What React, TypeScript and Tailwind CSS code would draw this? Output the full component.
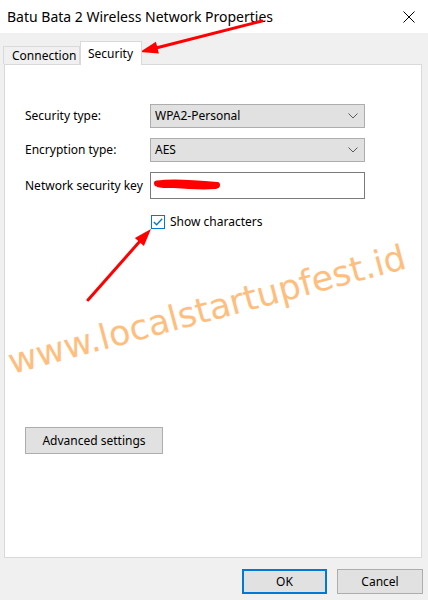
import React from "react";

const Chevron = () => (
  <svg width="10" height="6" viewBox="0 0 10 6" className="block">
    <path d="M0.5 0.5 L5 5 L9.5 0.5" fill="none" stroke="#5a5a5a" strokeWidth="1" />
  </svg>
);

export default function App() {
  return (
    <div
      className="relative w-[428px] h-[600px] bg-[#f0f0f0] flex flex-col overflow-hidden text-[#000] text-[12px]"
      style={{ fontFamily: '"Segoe UI", "Noto Sans", "Liberation Sans", sans-serif' }}
    >
      {/* title bar */}
      <div className="h-[33px] bg-white flex items-center justify-between pl-[7px] pr-[13px] shrink-0">
        <span className="text-[14px] leading-none">Batu Bata 2 Wireless Network Properties</span>
        <svg width="12" height="12" viewBox="0 0 12 12">
          <path d="M0.5 0.5 L11.5 11.5 M11.5 0.5 L0.5 11.5" stroke="#000" strokeWidth="1" />
        </svg>
      </div>

      {/* tabs */}
      <div className="flex items-end pl-[3px] mt-[8px] h-[23px] shrink-0 relative z-10">
        <div className="h-[18px] px-[8px] flex items-center border border-b-0 border-[#d9d9d9] bg-[#f0f0f0] w-[77px]">
          Connection
        </div>
        <div className="h-[24px] -mb-px px-[7px] flex items-center border border-b-0 border-[#d9d9d9] bg-white w-[62px]">
          Security
        </div>
      </div>

      {/* panel */}
      <div className="ml-[4px] w-[418px] h-[494px] bg-white border border-[#d9d9d9] shrink-0 flex flex-col pl-[20px] pt-[39px]">
        <div className="flex items-center h-[24px]">
          <span className="w-[125px]">Security type:</span>
          <div className="w-[215px] h-[24px] bg-[#e1e1e1] border border-[#adadad] flex items-center justify-between pl-[4px] pr-[6px]">
            <span>WPA2-Personal</span>
            <Chevron />
          </div>
        </div>
        <div className="flex items-center h-[24px] mt-[10px]">
          <span className="w-[125px]">Encryption type:</span>
          <div className="w-[215px] h-[24px] bg-[#e1e1e1] border border-[#adadad] flex items-center justify-between pl-[4px] pr-[6px]">
            <span>AES</span>
            <Chevron />
          </div>
        </div>
        <div className="flex items-center h-[27px] mt-[10px]">
          <span className="w-[125px]">Network security key</span>
          <div className="w-[215px] h-[27px] bg-white border border-[#7a7a7a] relative">
            <svg width="80" height="20" viewBox="0 0 80 20" className="absolute left-[1px] top-[2px]">
              <path
                d="M5 7 C 14 4, 24 5, 34 6 C 46 6, 58 7, 66 9 C 68 11, 68 13, 64 14 C 50 15, 36 14, 22 13 C 14 13, 8 13, 5 12 Z"
                fill="#ff0000"
              />
              <path d="M5 8.5 C 20 6, 45 8, 65 10" stroke="#ff0000" strokeWidth="6" fill="none" strokeLinecap="round" />
            </svg>
          </div>
        </div>
        <div className="flex items-center mt-[15px] ml-[126px] h-[15px]">
          <div className="w-[14px] h-[14px] border border-[#0078d7] bg-white flex items-center justify-center">
            <svg width="10" height="8" viewBox="0 0 10 8">
              <path d="M0.8 4 L3.6 6.8 L9.2 0.8" fill="none" stroke="#0078d7" strokeWidth="1.3" />
            </svg>
          </div>
          <span className="ml-[5px]">Show characters</span>
        </div>

        <div className="mt-[198px] w-[138px] h-[27px] bg-[#e1e1e1] border border-[#adadad] flex items-center justify-center">
          Advanced settings
        </div>
      </div>

      {/* buttons */}
      <div className="flex justify-end gap-[10px] pr-[5px] mt-[11px]">
        <div className="w-[85px] h-[25px] bg-[#e1e1e1] border-2 border-[#0078d7] flex items-center justify-center">
          OK
        </div>
        <div className="w-[86px] h-[25px] bg-[#e1e1e1] border border-[#adadad] flex items-center justify-center">
          Cancel
        </div>
      </div>

      {/* watermark */}
      <div
        className="absolute left-[207px] top-[310px] -translate-x-1/2 -translate-y-1/2 -rotate-[15deg] whitespace-nowrap text-[#ffb870] text-[35px] leading-none pointer-events-none"
        style={{ fontFamily: '"DejaVu Sans", sans-serif', opacity: 0.9 }}
      >
        www.localstartupfest.id
      </div>

      {/* arrows overlay */}
      <svg className="absolute left-0 top-0 pointer-events-none" width="428" height="600" viewBox="0 0 428 600">
        <line x1="262" y1="21" x2="156" y2="48" stroke="#ff0000" strokeWidth="3" strokeLinecap="round" />
        <polygon points="140,52 155.9,41.8 158.9,53.4" fill="#ff0000" />
        <line x1="88" y1="300" x2="141" y2="240" stroke="#ff0000" strokeWidth="3" strokeLinecap="round" />
        <polygon points="151,229 134.9,238 143.9,246" fill="#ff0000" />
      </svg>
    </div>
  );
}
